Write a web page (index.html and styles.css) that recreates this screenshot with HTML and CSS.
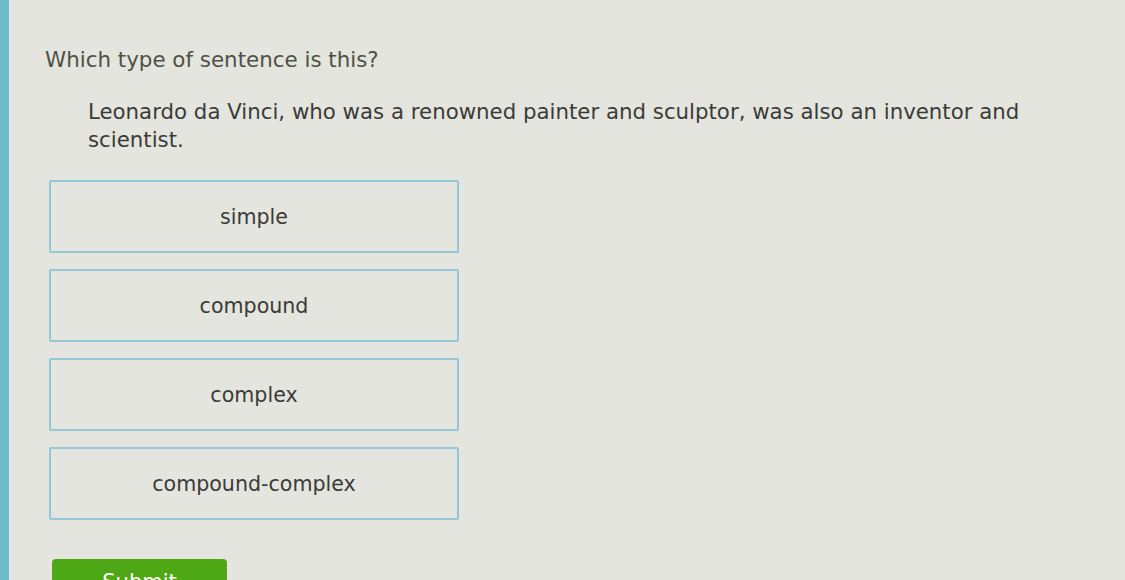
FILE: index.html
```html
<!DOCTYPE html>
<html lang="en">
<head>
    <meta charset="UTF-8">
    <title>Sentence types</title>
    <link rel="stylesheet" href="styles.css">
</head>
<body>
    <div class="page">
        <div class="question">Which type of sentence is this?</div>
        <div class="passage">Leonardo da Vinci, who was a renowned painter and sculptor, was also an inventor and scientist.</div>

        <div class="choices">
            <div class="choice">simple</div>
            <div class="choice">compound</div>
            <div class="choice">complex</div>
            <div class="choice">compound-complex</div>
        </div>

        <button class="submit">Submit</button>
    </div>
</body>
</html>
```

FILE: styles.css
```css
html, body {
    margin: 0;
    height: 100%;
    overflow: hidden;
}
body {
    background: #e4e5de;
    font-family: "DejaVu Sans", Verdana, sans-serif;
    color: #3b3b38;
}
.page {
    border-left: 9px solid #6cbccb;
    height: 100%;
    box-sizing: border-box;
    padding: 46px 0 0 36px;
}
.question {
    font-size: 21.4px;
    line-height: 28px;
    color: #4f5146;
}
.passage {
    font-size: 21.3px;
    line-height: 28px;
    margin: 24px 0 0 43px;
    width: 950px;
}
.choices {
    display: flex;
    flex-direction: column;
    gap: 16px;
    margin: 26px 0 0 4px;
    width: 410px;
}
.choice {
    height: 73px;
    box-sizing: border-box;
    border: 2px solid #95c6d6;
    border-radius: 2px;
    display: flex;
    align-items: center;
    justify-content: center;
    font-size: 20.6px;
}
.submit {
    margin: 39px 0 0 7px;
    width: 175px;
    height: 46px;
    border: none;
    border-radius: 4px;
    background: #4ea816;
    color: #fff;
    font-family: inherit;
    font-size: 21px;
}
```
